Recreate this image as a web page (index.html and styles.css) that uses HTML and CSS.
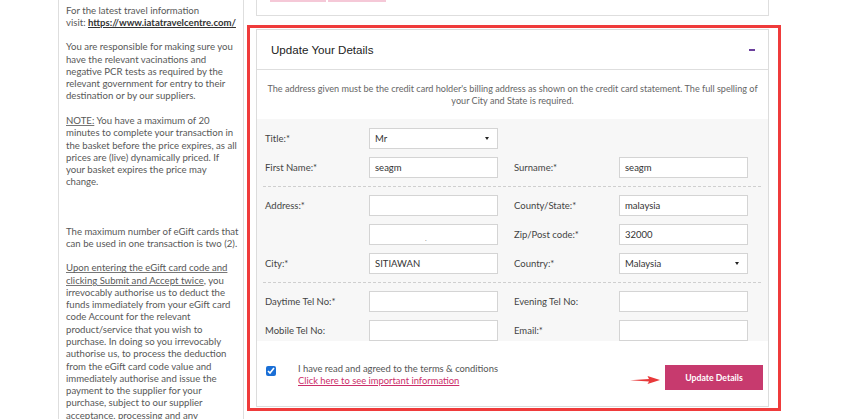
FILE: index.html
```html
<!DOCTYPE html>
<html lang="en">
<head>
<meta charset="utf-8">
<title>Update Your Details</title>
<link rel="stylesheet" href="styles.css">
</head>
<body>
<div class="page">
  <aside class="sidebar">
    <p>For the latest travel information<br>visit: <a class="ext" href="#">https://www.iatatravelcentre.com/</a></p>
    <p>You are responsible for making sure you<br>have the relevant vacinations and<br>negative PCR tests as required by the<br>relevant government for entry to their<br>destination or by our suppliers.</p>
    <p class="wide-gap"><u>NOTE:</u> You have a maximum of 20<br>minutes to complete your transaction in<br>the basket before the price expires, as all<br>prices are (live) dynamically priced. If<br>your basket expires the price may<br>change.</p>
    <p>The maximum number of eGift cards that<br>can be used in one transaction is two (2).</p>
    <p><u>Upon entering the eGift card code and<br>clicking Submit and Accept twice</u>, you<br>irrevocably authorise us to deduct the<br>funds immediately from your eGift card<br>code Account for the relevant<br>product/service that you wish to<br>purchase. In doing so you irrevocably<br>authorise us, to process the deduction<br>from the eGift card code value and<br>immediately authorise and issue the<br>payment to the supplier for your<br>purchase, subject to our supplier<br>acceptance, processing and any</p>
  </aside>

  <main class="main">
    <div class="prev-card">
      <span class="pink pink-a"></span><span class="pink pink-b"></span>
    </div>

    <div class="highlight">
      <section class="card">
        <header class="card-head">
          <h2 class="card-title">Update Your Details</h2>
          <span class="collapse" aria-label="collapse"></span>
        </header>

        <p class="note">The address given must be the credit card holder's billing address as shown on the credit card statement. The full spelling of<br>your City and State is required.</p>

        <div class="form-body">
          <div class="row">
            <label class="lbl">Title:*</label>
            <div class="select-wrap"><select class="field select"><option>Mr</option></select></div>
          </div>
          <div class="row">
            <label class="lbl">First Name:*</label>
            <input class="field" type="text" value="seagm">
            <label class="lbl lbl-r">Surname:*</label>
            <input class="field" type="text" value="seagm">
          </div>
          <hr class="sep">
          <div class="row">
            <label class="lbl">Address:*</label>
            <input class="field" type="text" value="">
            <label class="lbl lbl-r">County/State:*</label>
            <input class="field" type="text" value="malaysia">
          </div>
          <div class="row">
            <span class="lbl"></span>
            <input class="field field-dot" type="text" value=".">
            <label class="lbl lbl-r">Zip/Post code:*</label>
            <input class="field" type="text" value="32000">
          </div>
          <div class="row">
            <label class="lbl">City:*</label>
            <input class="field" type="text" value="SITIAWAN">
            <label class="lbl lbl-r">Country:*</label>
            <div class="select-wrap"><select class="field select"><option>Malaysia</option></select></div>
          </div>
          <hr class="sep">
          <div class="row">
            <label class="lbl">Daytime Tel No:*</label>
            <input class="field" type="text" value="">
            <label class="lbl lbl-r">Evening Tel No:</label>
            <input class="field" type="text" value="">
          </div>
          <div class="row">
            <label class="lbl">Mobile Tel No:</label>
            <input class="field" type="text" value="">
            <label class="lbl lbl-r">Email:*</label>
            <input class="field" type="text" value="">
          </div>
        </div>

        <div class="form-foot">
          <div class="agree">
            <input class="check" type="checkbox" checked>
            <div class="agree-text">I have read and agreed to the terms &amp; conditions<br><a class="agree-link" href="#">Click here to see important information</a></div>
          </div>
          <div class="actions">
            <svg class="pointer" width="30" height="10" viewBox="0 0 30 10" aria-hidden="true">
              <polygon points="0,5.3 19,4 17.5,1 30,5 17.5,9 19,6.4" fill="#e8393a"/>
            </svg>
            <button class="btn" type="button">Update Details</button>
          </div>
        </div>
      </section>
    </div>
  </main>
</div>
</body>
</html>
```

FILE: styles.css
```css
* { box-sizing: border-box; }

html, body {
  margin: 0;
  height: 419px;
  overflow: hidden;
  background: #fff;
}

body {
  font-family: Lato, "Liberation Sans", sans-serif;
  color: #444;
}

.page {
  display: flex;
  align-items: flex-start;
  height: 419px;
  overflow: hidden;
  padding-left: 58px;
}

/* ---------- sidebar ---------- */
.sidebar {
  width: 186px;
  height: 419px;
  overflow: hidden;
  border-left: 1px solid #dedede;
  border-right: 1px solid #dedede;
  padding: 4.5px 4px 0 7px;
  font-size: 9.6px;
  line-height: 12.28px;
  color: #585858;
}

.sidebar p {
  margin: 0 0 12.28px;
  white-space: nowrap;
}

.sidebar .wide-gap { margin-bottom: 36.84px; }

.sidebar .ext {
  color: #333;
  font-weight: 700;
  text-decoration: underline;
}

.sidebar u { text-decoration-color: #777; }

/* ---------- main column ---------- */
.main {
  margin-left: 3px;
  width: 534px;
}

.prev-card {
  display: flex;
  gap: 2px;
  margin: 0 0 9px 9px;
  width: 513px;
  height: 16px;
  padding-left: 13px;
  border: 1px solid #dedede;
  border-top: 0;
}

.pink {
  height: 2px;
  background: #f5c8d7;
}
.pink-a { width: 56px; }
.pink-b { width: 58px; }

.highlight {
  border: 3px solid #ef3b3b;
  padding: 1px 9px 1px 6px;
}

.card {
  border: 1px solid #dcdcdc;
  background: #fff;
}

.card-head {
  height: 40px;
  border-bottom: 1px solid #dedede;
  display: flex;
  align-items: center;
  justify-content: space-between;
  padding: 0 13px 0 14px;
}

.card-title {
  margin: 0;
  font: 400 11.6px "Liberation Sans", Arial, sans-serif;
  color: #222;
}

.collapse {
  width: 6px;
  height: 2px;
  background: #6b3f9c;
}

.note {
  margin: 0;
  height: 49px;
  padding: 13px 4px 12px;
  text-align: center;
  white-space: nowrap;
  font-size: 9.1px;
  line-height: 12px;
  color: #666;
}

/* ---------- form ---------- */
.form-body {
  background: #f7f7f7;
  padding: 9px 7px 0 8px;
}

.row {
  display: flex;
  align-items: center;
  height: 21px;
  margin-bottom: 8px;
}

.lbl {
  width: 104px;
  font-size: 9.5px;
  color: #444;
}

.lbl-r {
  width: 105px;
  margin-left: 16px;
}

.field {
  width: 129px;
  height: 21px;
  margin: 0;
  border: 1px solid #d4d4d4;
  border-radius: 0;
  background: #fff;
  padding: 0 0 0 5px;
  font: 9.5px Lato, "Liberation Sans", sans-serif;
  color: #333;
  outline: none;
}

.field-dot {
  padding-left: 55px;
  padding-top: 6px;
  color: #888;
  font-size: 7px;
}

.select-wrap {
  position: relative;
  width: 129px;
  height: 21px;
}

.select {
  appearance: none;
  -webkit-appearance: none;
  display: block;
}

.select-wrap::after {
  content: "";
  position: absolute;
  right: 9px;
  top: 9px;
  border-left: 2px solid transparent;
  border-right: 2px solid transparent;
  border-top: 3px solid #222;
}

.sep {
  border: 0;
  border-top: 1px dashed #cfcfcf;
  height: 0;
  margin: 0 0 8px -2px;
}

/* ---------- footer ---------- */
.form-foot {
  height: 57px;
  display: flex;
  justify-content: space-between;
  align-items: flex-start;
  padding: 16px 5px 16px 9px;
}

.agree {
  display: flex;
  align-items: flex-start;
  margin-top: -2px;
}

.check {
  width: 10px;
  height: 10px;
  margin: 3px 22px 0 0;
  accent-color: #1a6fd6;
}

.agree-text {
  font-size: 9.4px;
  line-height: 12px;
  color: #555;
}

.agree-link {
  color: #cc2f6a;
  text-decoration: underline;
}

.actions {
  display: flex;
  align-items: center;
  gap: 5px;
}

.pointer {
  margin-top: 5px;
  display: block;
}

.btn {
  width: 98px;
  height: 25px;
  border: 0;
  background: #c73a6e;
  color: #fff;
  font: 700 8.7px Lato, "Liberation Sans", sans-serif;
  padding: 0;
}
```
